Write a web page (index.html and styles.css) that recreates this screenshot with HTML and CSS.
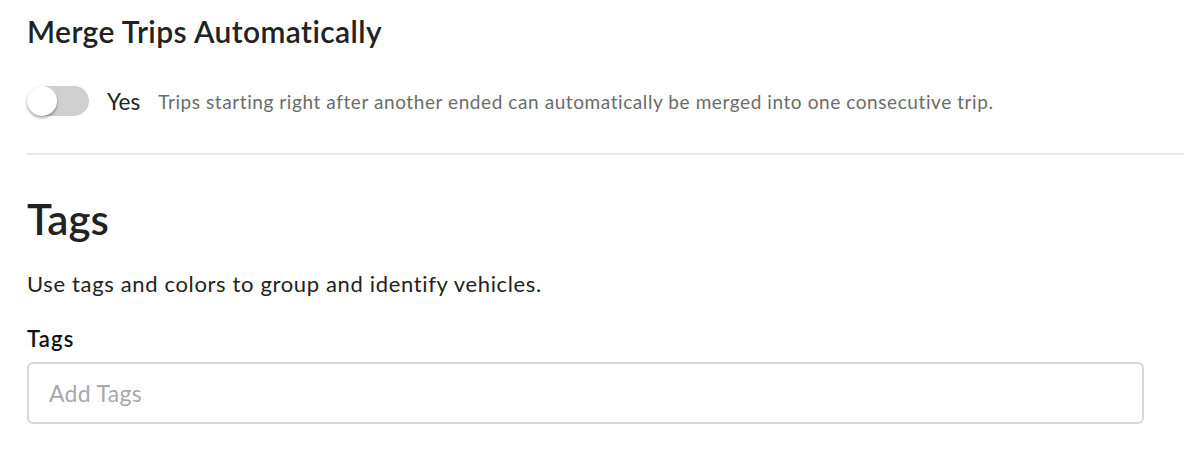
FILE: index.html
```html
<!DOCTYPE html>
<html lang="en">
<head>
  <meta charset="UTF-8">
  <title>Vehicle Settings</title>
  <link rel="stylesheet" href="styles.css">
</head>
<body>

<div class="settings">
  <h3 class="setting-title">Merge Trips Automatically</h3>
  <div class="toggle-row">
    <label class="switch">
      <input type="checkbox">
      <span class="slider"></span>
    </label>
    <span class="toggle-label">Yes</span>
    <span class="hint">Trips starting right after another ended can automatically be merged into one consecutive trip.</span>
  </div>

  <div class="divider"></div>

  <h2 class="section-title">Tags</h2>
  <p class="section-text">Use tags and colors to group and identify vehicles.</p>

  <div class="field">
    <label class="field-label" for="tags">Tags</label>
    <input type="text" id="tags" class="text-input" placeholder="Add Tags">
  </div>
</div>

</body>
</html>
```

FILE: styles.css
```css
body {
  margin: 0;
  font-family: Lato, 'Open Sans', sans-serif;
  background: #ffffff;
  color: #222;
}
.settings {
  padding-left: 27px;
}
.setting-title {
  margin: 13px 0 0;
  font-size: 30px;
  line-height: 36px;
  font-weight: 600;
  letter-spacing: 0.4px;
  color: #222;
}
.toggle-row {
  display: flex;
  align-items: center;
  height: 32px;
  margin-top: 36px;
}
.switch {
  position: relative;
  display: inline-block;
  width: 62px;
  height: 30px;
  flex-shrink: 0;
}
.switch input {
  display: none;
}
.slider {
  position: absolute;
  inset: 0;
  background-color: #cfcfcf;
  border-radius: 15px;
}
.slider::before {
  content: "";
  position: absolute;
  left: 0;
  top: 0;
  width: 30px;
  height: 30px;
  border-radius: 50%;
  background: #fff;
  box-shadow: 0 2px 3px rgba(0,0,0,0.35);
}
.toggle-label {
  margin-left: 18px;
  font-size: 22.5px;
  color: #222;
}
.hint {
  margin-left: 18px;
  font-size: 19px;
  letter-spacing: 0.58px;
  color: #6b6b6b;
}
.divider {
  height: 2px;
  background: #e8e8e8;
  margin-top: 36px;
}
.section-title {
  margin: 40px 0 0;
  font-size: 42px;
  line-height: 48px;
  font-weight: 600;
  color: #222;
}
.section-text {
  margin: 27px 0 0;
  font-size: 22px;
  line-height: 28px;
  letter-spacing: 0.65px;
}
.field {
  margin-top: 28px;
}
.field-label {
  display: block;
  font-size: 22px;
  line-height: 26px;
  font-weight: 600;
  letter-spacing: 1.2px;
  color: #111;
}
.text-input {
  display: block;
  box-sizing: border-box;
  margin-top: 10px;
  width: 1117px;
  height: 62px;
  padding: 0 20px;
  border: 2px solid #d6d6d6;
  border-radius: 6px;
  font-family: Lato, 'Open Sans', sans-serif;
  font-size: 23px;
  letter-spacing: 0.3px;
  color: #222;
}
.text-input::placeholder {
  color: #a8a8a8;
}
```
